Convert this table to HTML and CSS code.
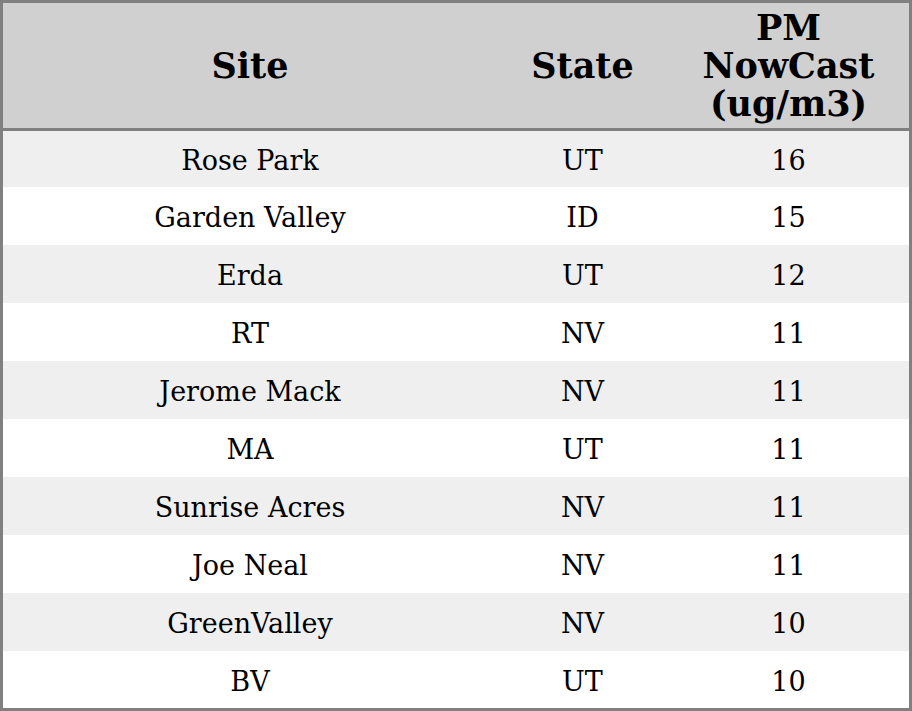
FILE: index.html
```html
<!DOCTYPE html>
<html>
<head>
<meta charset="utf-8">
<link rel="stylesheet" href="styles.css">
</head>
<body>
<table class="aq">
  <colgroup>
    <col class="c-site">
    <col class="c-state">
    <col class="c-pm">
  </colgroup>
  <thead>
    <tr>
      <th>Site</th>
      <th>State</th>
      <th>PM<br>NowCast<br>(ug/m3)</th>
    </tr>
  </thead>
  <tbody>
    <tr><td>Rose Park</td><td>UT</td><td>16</td></tr>
    <tr><td>Garden Valley</td><td>ID</td><td>15</td></tr>
    <tr><td>Erda</td><td>UT</td><td>12</td></tr>
    <tr><td>RT</td><td>NV</td><td>11</td></tr>
    <tr><td>Jerome Mack</td><td>NV</td><td>11</td></tr>
    <tr><td>MA</td><td>UT</td><td>11</td></tr>
    <tr><td>Sunrise Acres</td><td>NV</td><td>11</td></tr>
    <tr><td>Joe Neal</td><td>NV</td><td>11</td></tr>
    <tr><td>GreenValley</td><td>NV</td><td>10</td></tr>
    <tr><td>BV</td><td>UT</td><td>10</td></tr>
  </tbody>
</table>
</body>
</html>
```
FILE: styles.css
```css
html, body {
  margin: 0;
  padding: 0;
  background: #ffffff;
}
.aq {
  width: 912px;
  table-layout: fixed;
  border-collapse: separate;
  border-spacing: 0;
  border: 3px solid #808080;
  font-family: "DejaVu Serif", serif;
  color: #000;
}
.c-site { width: 494px; }
.c-state { width: 171px; }
.c-pm { width: 241px; }
.aq th {
  background: #d0d0d0;
  font-size: 35px;
  font-weight: bold;
  line-height: 38px;
  height: 125px;
  padding: 0;
  text-align: center;
  vertical-align: middle;
  border-bottom: 3px solid #808080;
}
.aq td {
  font-size: 27px;
  line-height: 30px;
  height: 54px;
  padding: 4px 0 0;
  text-align: center;
  vertical-align: middle;
}
.aq tbody tr:nth-child(odd) td {
  background: #efefef;
}
.aq tbody tr:first-child td {
  height: 52px;
}
.aq tbody tr:last-child td {
  height: 53px;
}
```
